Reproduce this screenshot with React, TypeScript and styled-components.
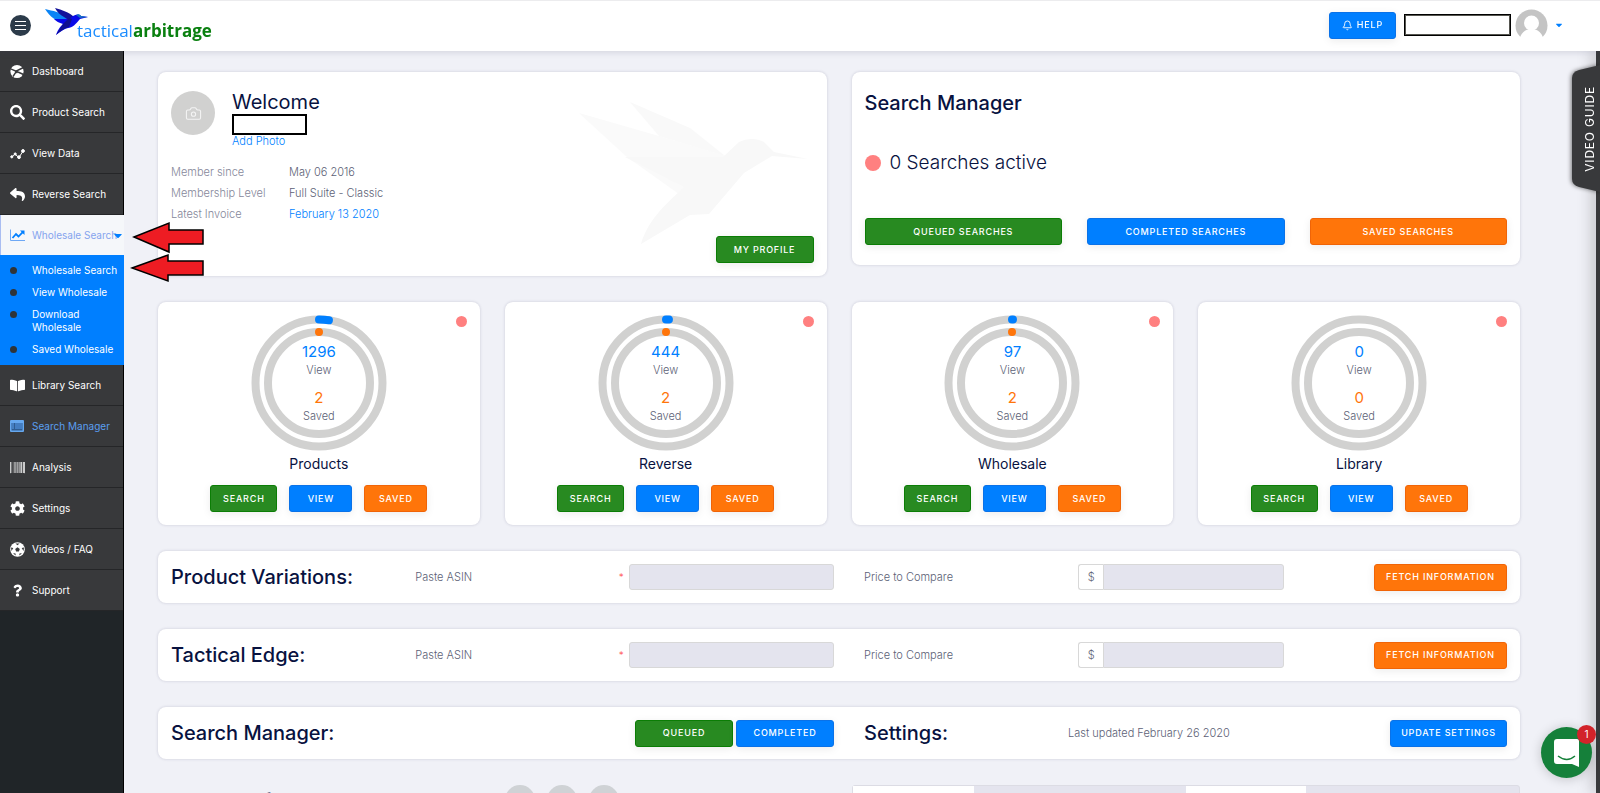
import React from 'react';
import styled, { createGlobalStyle, css } from 'styled-components';
import { FaSearch, FaReply, FaBookOpen, FaCog, FaQuestion, FaCaretDown, FaBarcode } from 'react-icons/fa';
import { Camera, Bell } from 'lucide-react';

const colors = {
  green: '#288a21',
  greenEdge: '#0b7d05',
  blue: '#007fff',
  blueEdge: '#0a72e8',
  orange: '#ff750a',
  orangeEdge: '#f06407',
  navy: '#08123f',
  text: '#5c5f76',
  ring: '#d1d1d0',
  red: '#ff8080',
};

type Tone = 'green' | 'blue' | 'orange';

const GlobalStyle = createGlobalStyle`
  * { box-sizing: border-box; }
  html, body { margin: 0; }
  body {
    background: #f0f1f7;
    color: ${colors.text};
    font-family: Inter, 'Open Sans', sans-serif;
    font-size: 11px;
    line-height: 16px;
  }
  a { color: ${colors.blue}; text-decoration: none; }
  button, input { font: inherit; }
  h1, h2, h3, p, ul, dl, dd { margin: 0; padding: 0; }
  ul { list-style: none; }
`;

const Page = styled.div`
  display: flex;
  flex-direction: column;
  height: 100vh;
  overflow: hidden;
`;

const TopBar = styled.header`
  position: relative;
  z-index: 2;
  display: flex;
  align-items: center;
  flex: none;
  height: 51px;
  padding: 0 36px 2px 10px;
  background: #fff;
  border-top: 1px solid #ececee;
  box-shadow: 0 2px 6px rgba(60, 60, 90, 0.14);
`;

const MenuButton = styled.button`
  display: grid;
  place-items: center;
  width: 21px;
  height: 21px;
  padding: 0;
  border: 0;
  border-radius: 50%;
  background: #2c3b4a;
`;

const Brand = styled.a`
  display: flex;
  align-items: flex-start;
  height: 34px;
  margin-left: 14px;
  color: #1a8cff;
  font-family: 'Open Sans', sans-serif;
  font-size: 17px;
  line-height: 20px;
`;

const BrandName = styled.span`
  margin: 13px 0 0 -11px;
  strong { color: #0a8010; }
`;

const TopActions = styled.div`
  display: flex;
  align-items: center;
  gap: 8px;
  margin-left: auto;
`;

const NameBox = styled.div`
  width: 107px;
  height: 22px;
  border: 1px solid #000;
  outline: 1px solid #55554f;
  outline-offset: -2px;
  background: #fff;
`;

const Account = styled.button`
  display: flex;
  align-items: center;
  gap: 6px;
  padding: 0;
  margin-left: -4px;
  border: 0;
  background: none;
  color: ${colors.blue};
  font-size: 10px;
`;

const Body = styled.div`
  display: flex;
  flex: 1;
  min-height: 0;
`;

const Sidebar = styled.nav`
  flex: none;
  width: 124px;
  background: #202528;
  border-right: 1px solid #000;
`;

const NavLink = styled.a<{ $active?: boolean; $tint?: boolean }>`
  display: flex;
  align-items: center;
  gap: 7px;
  height: 41px;
  padding-left: 10px;
  background: #38393b;
  border-bottom: 1px solid #252628;
  color: #fff;
  font-size: 10px;
  white-space: nowrap;
  svg { flex: none; width: 15px; height: 15px; }
  ${p => p.$tint && css`color: #5a9ff0;`}
  ${p => p.$active && css`
    height: 40px;
    background: #f5f7fa;
    border-bottom: 0;
    border-left: 1px solid #a9bdf2;
    padding-left: 9px;
    color: #86a4ee;
    margin-right: -1px;
    svg { color: ${colors.blue}; }
    svg:last-child { width: 8px; margin-left: -10px; }
  `}
`;

const SubMenu = styled.ul`
  display: flex;
  flex-direction: column;
  gap: 9px;
  margin-right: -1px;
  padding: 9px 6px 9px 10px;
  background: ${colors.blue};
`;

const SubItem = styled.li`
  display: flex;
  gap: 15px;
  font-size: 10px;
  line-height: 13px;
  &::before {
    content: '';
    flex: none;
    width: 7px;
    height: 7px;
    margin-top: 3px;
    border-radius: 50%;
    background: #2f3438;
  }
  a { color: #fff; }
`;

const Content = styled.main`
  display: flex;
  flex-direction: column;
  gap: 26px;
  flex: 1;
  min-width: 0;
  overflow: hidden;
  padding: 21px 80px 0 34px;
  font-weight: 300;
`;

const Row = styled.div<{ $cols: number }>`
  display: grid;
  flex: none;
  grid-template-columns: repeat(${p => p.$cols}, minmax(0, 1fr));
  gap: 25px;
  align-items: start;
`;

const Card = styled.section`
  position: relative;
  padding: 13px;
  background: #fff;
  border-radius: 8px;
  box-shadow: 0 0 3px rgba(60, 60, 100, 0.22);
`;

const tones = {
  green: css`background: ${colors.green}; border-color: ${colors.greenEdge};`,
  blue: css`background: ${colors.blue}; border-color: ${colors.blueEdge};`,
  orange: css`background: ${colors.orange}; border-color: ${colors.orangeEdge};`,
};

const Button = styled.button<{ $tone: Tone; $width?: number }>`
  display: flex;
  align-items: center;
  justify-content: center;
  gap: 4px;
  height: 27px;
  padding: 0 12px;
  ${p => p.$width && css`width: ${p.$width}px;`}
  border: 1px solid;
  border-radius: 3px;
  color: #fff;
  font-size: 9px;
  font-weight: 500;
  letter-spacing: 0.8px;
  white-space: nowrap;
  box-shadow: 0 2px 8px rgba(0, 0, 0, 0.08);
  ${p => tones[p.$tone]}
`;

const WelcomeCard = styled(Card)`
  display: flex;
  flex-direction: column;
  height: 204px;
  padding-top: 19px;
`;

const Person = styled.div`
  display: flex;
  gap: 17px;
`;

const PersonText = styled.div`
  display: flex;
  flex-direction: column;
  line-height: 13px;
`;

const Photo = styled.div`
  display: grid;
  place-items: center;
  width: 44px;
  height: 44px;
  border-radius: 50%;
  background: ${colors.ring};
  color: #f4f4f4;
`;

const WelcomeTitle = styled.h1`
  color: ${colors.navy};
  font-size: 20px;
  font-weight: 400;
  line-height: 23px;
`;

const NameMask = styled.div`
  width: 75px;
  height: 21px;
  border: 2px solid #000;
`;

const Facts = styled.dl`
  display: grid;
  grid-template-columns: 118px auto;
  row-gap: 5px;
  margin-top: 16px;
  dt { color: #85879a; }
`;

const Watermark = styled.svg`
  position: absolute;
  right: 18px;
  top: 30px;
  width: 230px;
  height: 148px;
`;

const ProfileAction = styled.div`
  display: flex;
  justify-content: flex-end;
  margin-top: auto;
`;

const Heading = styled.h2`
  color: ${colors.navy};
  font-size: 20px;
  font-weight: 500;
  line-height: 24px;
  white-space: nowrap;
`;

const ManagerCard = styled(Card)`
  padding: 19px 13px 20px;
`;

const ActiveLine = styled.p`
  display: flex;
  align-items: center;
  gap: 9px;
  margin: 35px 0 42px;
  color: ${colors.navy};
  font-size: 19px;
  line-height: 26px;
`;

const Dot = styled.span<{ $size: number }>`
  width: ${p => p.$size}px;
  height: ${p => p.$size}px;
  border-radius: 50%;
  background: ${colors.red};
`;

const StatCard = styled(Card)`
  display: flex;
  flex-direction: column;
  align-items: center;
  height: 223px;
`;

const CornerDot = styled.div`
  position: absolute;
  top: 14px;
  right: 13px;
  display: flex;
`;

const Gauge = styled.div`
  display: grid;
  width: 136px;
  height: 136px;
  text-align: center;
  > * { grid-area: 1 / 1; }
`;

const GaugeText = styled.div`
  display: flex;
  flex-direction: column;
  align-items: center;
  padding-top: 27px;
`;

const Figure = styled.span<{ $tone: Tone }>`
  color: ${p => colors[p.$tone]};
  font-size: 15px;
  font-weight: 400;
  line-height: 20px;
`;

const Caption = styled.span`
  margin-bottom: 10px;
`;

const StatName = styled.h3`
  margin: 3px 0 11px;
  color: ${colors.navy};
  font-size: 14px;
  font-weight: 400;
  line-height: 20px;
`;

const StatButtons = styled.div`
  display: flex;
  gap: 12px;
`;

const Strip = styled(Card)`
  display: grid;
  align-items: center;
  flex: none;
  grid-template-columns: minmax(0, 663fr) minmax(0, 643fr);
  gap: 30px;
  height: 52px;
  padding: 0 13px;
`;

const StripHalf = styled.div`
  display: flex;
  align-items: center;
  min-width: 0;
`;

const TitleCell = styled.div<{ $share: number }>`
  flex: ${p => p.$share};
`;

const LabelCell = styled.label<{ $share: number }>`
  flex: ${p => p.$share};
`;

const Required = styled.span`
  width: 10px;
  color: #ff4d4d;
  font-size: 10px;
`;

const Field = styled.input<{ $share: number; $joined?: boolean }>`
  flex: ${p => p.$share};
  min-width: 0;
  height: 26px;
  padding: 0;
  border: 1px solid #d8d8d8;
  border-radius: ${p => (p.$joined ? '0 3px 3px 0' : '3px')};
  background: #e4e4ee;
`;

const Currency = styled.span`
  display: grid;
  place-items: center;
  width: 25px;
  height: 26px;
  border: 1px solid #d8d8d8;
  border-right: 0;
  border-radius: 3px 0 0 3px;
`;

const Push = styled.div<{ $share: number }>`
  display: flex;
  justify-content: flex-end;
  flex: ${p => p.$share};
  gap: 3px;
`;

const BottomLead = styled.div`
  display: flex;
  align-items: flex-start;
  gap: 12px;
`;

const BottomText = styled.p`
  width: 335px;
  padding: 2px 0 0 39px;
  color: ${colors.navy};
  font-size: 16px;
  font-weight: 500;
  line-height: 24px;
`;

const Round = styled.button`
  width: 30px;
  height: 30px;
  border: 0;
  border-radius: 50%;
  background: #cfd2d5;
`;

const Tabs = styled.div`
  display: flex;
  height: 34px;
  border: 1px solid #dcdce4;
  border-radius: 3px;
  background: #e4e4ee;
`;

const TabCell = styled.div<{ $share: number; $on?: boolean }>`
  flex: ${p => p.$share};
  background: ${p => (p.$on ? '#fff' : 'transparent')};
`;

const Edge = styled.aside`
  position: fixed;
  z-index: 1;
  top: 51px;
  right: 0;
  bottom: 0;
  width: 4px;
  background: #38393b;
  box-shadow: 0 0 16px rgba(0, 0, 0, 0.6);
`;

const GuideTab = styled.button`
  position: absolute;
  top: 14px;
  right: 0;
  display: flex;
  align-items: center;
  justify-content: center;
  width: 28px;
  height: 127px;
  padding: 0 0 0 8px;
  border: 0;
  background: none;
  color: #fff;
  font-size: 12px;
  letter-spacing: 0.8px;
  svg { position: absolute; inset: 0; filter: drop-shadow(-1px 0 2px rgba(0, 0, 0, 0.5)); }
  span {
    position: relative;
    line-height: 20px;
    writing-mode: vertical-rl;
    transform: rotate(180deg);
  }
`;

const Chat = styled.button`
  position: fixed;
  z-index: 3;
  right: 8px;
  bottom: 15px;
  display: grid;
  place-items: center;
  width: 51px;
  height: 51px;
  padding: 0;
  border: 0;
  border-radius: 50%;
  background: #15803a;
  box-shadow: 0 1px 12px rgba(0, 0, 0, 0.2);
`;

const Badge = styled.span`
  position: absolute;
  top: -2px;
  right: -4px;
  width: 19px;
  height: 19px;
  border-radius: 50%;
  background: #d2232a;
  color: #fff;
  font-size: 10px;
  line-height: 19px;
`;

const Arrow = styled.svg`
  position: absolute;
  z-index: 2;
  left: 130px;
  top: 220px;
  width: 76px;
  height: 64px;
`;

const DashboardIcon = () => (
  <svg viewBox="0 0 15 15">
    <circle cx="7" cy="7.500" r="6.600" fill="#fff" />
    <path d="M0 4.600 6 7.200 13.500 3.500M6.400 7.400 3 12.500M8 8l5.500 2.500" stroke="#38393b" strokeWidth="1.400" fill="none" />
    <circle cx="6.600" cy="7.800" r="1.500" fill="#38393b" />
  </svg>
);

const DataIcon = () => (
  <svg viewBox="0 0 15 15" fill="#fff" stroke="#fff">
    <path d="M1.500 11 5 8.200 9 11.500 13 5" fill="none" strokeWidth="1" />
    <circle cx="1.800" cy="10.800" r="1.100" /><circle cx="5.200" cy="8" r="1.100" />
    <circle cx="9" cy="11.200" r="1.400" /><circle cx="13" cy="5" r="1.400" />
  </svg>
);

const TrendIcon = () => (
  <svg viewBox="0 0 15 15" fill="none">
    <path d="M.5 1.500v11H15" stroke="#6ea8f5" />
    <path d="m2.500 10 3.500-4 2.500 2.500L13 3.800" stroke="currentColor" strokeWidth="1.800" />
    <path d="M10 2.500h4.500V7z" fill="currentColor" />
  </svg>
);

const WindowIcon = () => (
  <svg viewBox="0 0 15 15">
    <rect x="0" y="1" width="14" height="12" rx="1" fill="#66a8ef" />
    <path d="M1.500 4h11v7.500h-11z" fill="#2f5d92" />
    <path d="M5 5h7M5 7h7M5 9h7M2 5h2M2 7h2M2 9h2" stroke="#5a9ff0" strokeWidth="1" />
  </svg>
);

const BallIcon = () => (
  <svg viewBox="0 0 15 15">
    <circle cx="7.500" cy="7.500" r="7.300" fill="#fff" />
    <path d="M5.400 1.500h4.200L7.500 3.200zM1 5.500l2.300.5L1.500 9zM14 5.500l-2.300.5L13.500 9zM3 11.500l2.300-.2.600 2.300zM12 11.500l-2.300-.2-.6 2.300z" fill="#38393b" />
    <path d="m7.500 5.200 2.300 1.700-.9 2.700H6.100l-.9-2.700z" fill="#38393b" />
  </svg>
);

const LogoBird = () => (
  <svg width="43" height="28" viewBox="0 0 43 28">
    <path d="M0 1c8 2 16 3 22 8l2 4-5 2C11 13 5 9 0 1z" fill="#0a84f5" />
    <path d="M10 0c7 2 14 4 19 9l-4 4-6-4c-4-2-7-5-9-9z" fill="#12129a" />
    <path d="M9 11h15l4-3c3-2 6-2 8 0l7 1-8 2c-4 5-8 9-12 9-4 1-8 4-12 7 2-6 5-9 7-11-4-1-7-3-9-5z" fill="#0909e8" />
    <path d="m18 16 6-6 3 1-3 8c-4 1-9 4-13 8z" fill="#101090" />
    <path d="m31 7c2-1 4-1 5 1l7 1-8 1z" fill="#166fc0" />
  </svg>
);

const navTop = [
  { label: 'Dashboard', icon: <DashboardIcon /> },
  { label: 'Product Search', icon: <FaSearch /> },
  { label: 'View Data', icon: <DataIcon /> },
  { label: 'Reverse Search', icon: <FaReply /> },
];

const navBottom = [
  { label: 'Library Search', icon: <FaBookOpen /> },
  { label: 'Search Manager', icon: <WindowIcon />, tint: true },
  { label: 'Analysis', icon: <FaBarcode /> },
  { label: 'Settings', icon: <FaCog /> },
  { label: 'Videos / FAQ', icon: <BallIcon /> },
  { label: 'Support', icon: <FaQuestion viewBox="-64 -64 512 640" /> },
];

const subItems = ['Wholesale Search', 'View Wholesale', 'Download Wholesale', 'Saved Wholesale'];

const stats = [
  { name: 'Products', view: 1296, saved: 2, arc: 10 },
  { name: 'Reverse', view: 444, saved: 2, arc: 3 },
  { name: 'Wholesale', view: 97, saved: 2, arc: 1 },
  { name: 'Library', view: 0, saved: 0, arc: 0 },
];

const Rings = ({ arc, saved }: { arc: number; saved: number }) => (
  <svg width="136" height="136" viewBox="0 0 136 136" fill="none" strokeWidth="8">
    <circle cx="68" cy="68" r="63.500" stroke={colors.ring} />
    <circle cx="68" cy="68" r="51" stroke={colors.ring} />
    {arc > 0 && (
      <circle cx="68" cy="68" r="63.500" stroke={colors.blue} strokeLinecap="round" strokeDasharray={`${arc} 500`} transform="rotate(-90 68 68)" />
    )}
    {saved > 0 && <circle cx="68" cy="17" r="4" fill={colors.orange} />}
  </svg>
);

const VariationStrip = ({ title, id }: { title: string; id: string }) => (
  <Strip>
    <StripHalf>
      <TitleCell $share={245}><Heading>{title}</Heading></TitleCell>
      <LabelCell $share={204} htmlFor={`${id}-asin`}>Paste ASIN</LabelCell>
      <Required>*</Required>
      <Field $share={204} id={`${id}-asin`} />
    </StripHalf>
    <StripHalf>
      <LabelCell $share={215} htmlFor={`${id}-price`}>Price to Compare</LabelCell>
      <Currency>$</Currency>
      <Field $share={179} $joined id={`${id}-price`} />
      <Push $share={224}><Button $tone="orange" $width={133}>FETCH INFORMATION</Button></Push>
    </StripHalf>
  </Strip>
);

export default function App() {
  return (
    <Page>
      <GlobalStyle />
      <TopBar>
        <MenuButton aria-label="Menu">
          <svg width="11" height="11" viewBox="0 0 11 11" stroke="#fff"><path d="M0 1.500h11M0 5.500h11M0 9.500h11" /></svg>
        </MenuButton>
        <Brand href="#">
          <LogoBird />
          <BrandName>tactical<strong>arbitrage</strong></BrandName>
        </Brand>
        <TopActions>
          <Button $tone="blue" $width={67}><Bell size={11} />HELP</Button>
          <NameBox />
          <Account aria-label="Account">
            <svg width="33" height="33" viewBox="0 0 33 33">
              <circle cx="16.500" cy="16.500" r="16" fill="#c4c4c4" />
              <circle cx="16.500" cy="14" r="7.500" fill="#fff" />
              <path d="M4 33c1-9 6-13 12.500-13S28 24 29 33z" fill="#fff" />
            </svg>
            <FaCaretDown />
          </Account>
        </TopActions>
      </TopBar>
      <Body>
        <Sidebar>
          {navTop.map(n => <NavLink href="#" key={n.label}>{n.icon}{n.label}</NavLink>)}
          <NavLink href="#" $active><TrendIcon />Wholesale Search<FaCaretDown /></NavLink>
          <SubMenu>
            {subItems.map(s => <SubItem key={s}><a href="#">{s}</a></SubItem>)}
          </SubMenu>
          {navBottom.map(n => <NavLink href="#" key={n.label} $tint={n.tint}>{n.icon}{n.label}</NavLink>)}
        </Sidebar>
        <Content>
          <Row $cols={2}>
            <WelcomeCard>
              <Watermark viewBox="0 0 230 148">
                <path d="M0 11 80 34 150 55 100 92 48 55z" fill="#fafafa" />
                <path d="M51 0 111 26 146 54 80 34z" fill="#f9f9f9" />
                <path d="M46 55h98l16-15c8-4 18-4 25 0l10 10 34 7-36-3-28 17-35 41-19 1-49 29c7-24 23-38 43-57z" fill="#f8f8f8" />
              </Watermark>
              <Person>
                <Photo><Camera size={17} strokeWidth={1.5} /></Photo>
                <PersonText>
                  <WelcomeTitle>Welcome</WelcomeTitle>
                  <NameMask />
                  <a href="#">Add Photo</a>
                </PersonText>
              </Person>
              <Facts>
                <dt>Member since</dt><dd>May 06 2016</dd>
                <dt>Membership Level</dt><dd>Full Suite - Classic</dd>
                <dt>Latest Invoice</dt><dd><a href="#">February 13 2020</a></dd>
              </Facts>
              <ProfileAction><Button $tone="green" $width={98}>MY PROFILE</Button></ProfileAction>
            </WelcomeCard>
            <ManagerCard>
              <Heading>Search Manager</Heading>
              <ActiveLine><Dot $size={16} />0 Searches active</ActiveLine>
              <Row $cols={3}>
                <Button $tone="green">QUEUED SEARCHES</Button>
                <Button $tone="blue">COMPLETED SEARCHES</Button>
                <Button $tone="orange">SAVED SEARCHES</Button>
              </Row>
            </ManagerCard>
          </Row>
          <Row $cols={4}>
            {stats.map(s => (
              <StatCard key={s.name}>
                <CornerDot><Dot $size={11} /></CornerDot>
                <Gauge>
                  <Rings arc={s.arc} saved={s.saved} />
                  <GaugeText>
                    <Figure $tone="blue">{s.view}</Figure>
                    <Caption>View</Caption>
                    <Figure $tone="orange">{s.saved}</Figure>
                    <Caption>Saved</Caption>
                  </GaugeText>
                </Gauge>
                <StatName>{s.name}</StatName>
                <StatButtons>
                  <Button $tone="green" $width={67}>SEARCH</Button>
                  <Button $tone="blue" $width={63}>VIEW</Button>
                  <Button $tone="orange" $width={63}>SAVED</Button>
                </StatButtons>
              </StatCard>
            ))}
          </Row>
          <VariationStrip title="Product Variations:" id="variations" />
          <VariationStrip title="Tactical Edge:" id="edge" />
          <Strip>
            <StripHalf>
              <Heading>Search Manager:</Heading>
              <Push $share={1}>
                <Button $tone="green" $width={98}>QUEUED</Button>
                <Button $tone="blue" $width={98}>COMPLETED</Button>
              </Push>
            </StripHalf>
            <StripHalf>
              <TitleCell $share={204}><Heading>Settings:</Heading></TitleCell>
              <TitleCell $share={215}>Last updated February 26 2020</TitleCell>
              <Push $share={224}><Button $tone="blue" $width={117}>UPDATE SETTINGS</Button></Push>
            </StripHalf>
          </Strip>
          <Row $cols={2}>
            <BottomLead>
              <BottomText>Search of all the latest products</BottomText>
              <Round aria-label="First" />
              <Round aria-label="Second" />
              <Round aria-label="Third" />
            </BottomLead>
            <Tabs>
              <TabCell $share={122} $on />
              <TabCell $share={212} />
              <TabCell $share={121} $on />
              <TabCell $share={213} />
            </Tabs>
          </Row>
        </Content>
      </Body>
      <Edge>
        <GuideTab>
          <svg width="28" height="127" viewBox="0 0 28 127"><path d="M28 0 7 5Q0 7 0 13v101q0 6 7 8l21 5z" fill="#38393b" /></svg>
          <span>VIDEO GUIDE</span>
        </GuideTab>
      </Edge>
      <Arrow viewBox="0 0 76 64" fill="#ee1c23" stroke="#000" strokeWidth="1.500">
        <path d="M4 17 39 3v7h34v14H39v8z" />
        <path d="M2 48 38 35v6h35v14H38v6z" />
      </Arrow>
      <Chat aria-label="Open chat">
        <svg width="26" height="28" viewBox="0 0 26 28">
          <path d="M3 0h20q2 0 2 2v26l-7-3H3q-3 0-3-3V3q0-3 3-3z" fill="#fff" />
          <path d="M4 17q9 7 17 0" stroke="#15803a" strokeWidth="1.500" fill="none" />
        </svg>
        <Badge>1</Badge>
      </Chat>
    </Page>
  );
}
